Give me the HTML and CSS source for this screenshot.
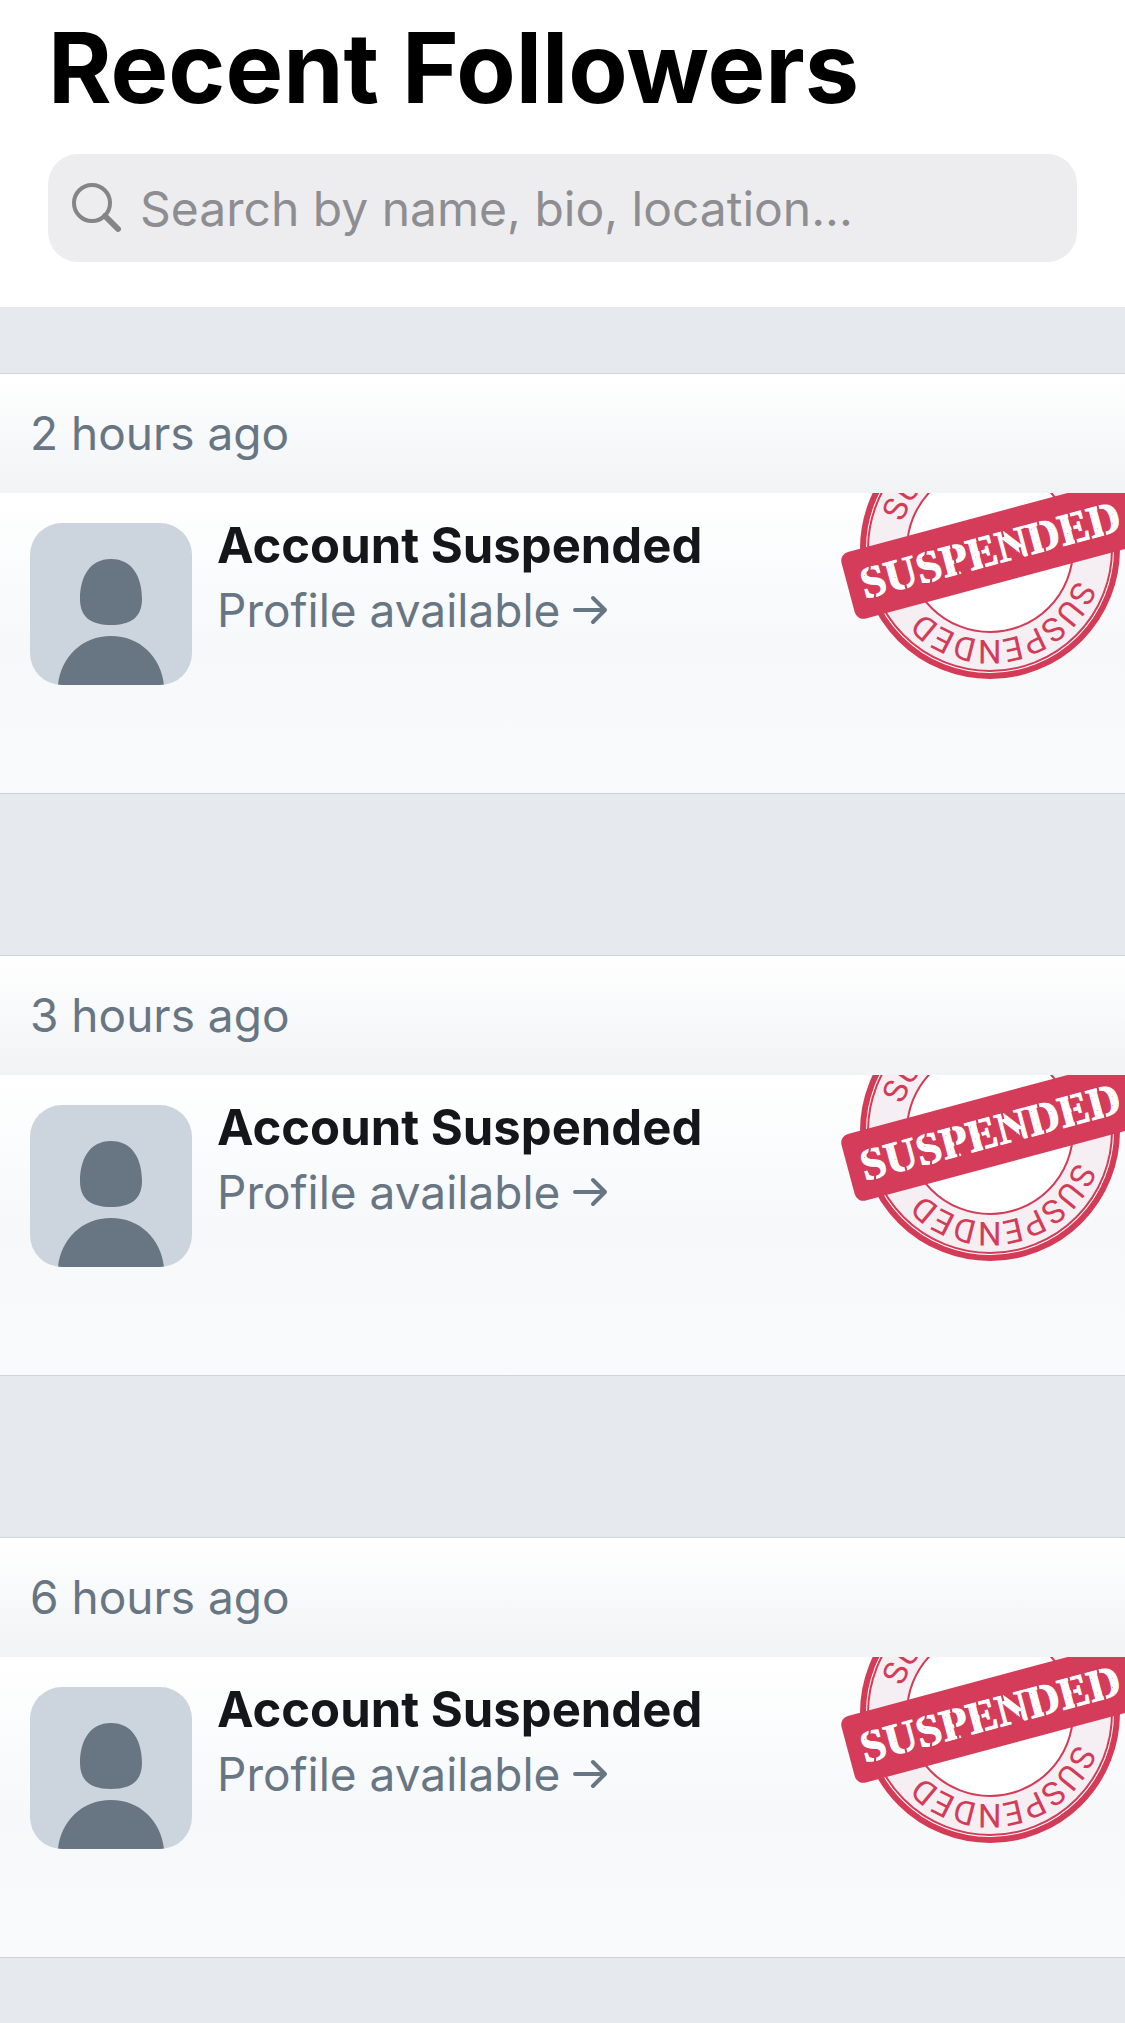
FILE: index.html
```html
<!DOCTYPE html>
<html lang="en">
<head>
<meta charset="utf-8">
<meta name="viewport" content="width=device-width, initial-scale=1">
<title>Recent Followers</title>
<link rel="stylesheet" href="styles.css">
</head>
<body>
<header class="page-header">
  <h1 class="title">Recent Followers</h1>
  <label class="search">
    <svg class="search-icon" viewBox="0 0 50 50" aria-hidden="true"><circle cx="20" cy="20" r="18"/><path d="M33 33 46 46"/></svg>
    <input class="search-input" type="search" placeholder="Search by name, bio, location..." aria-label="Search followers">
  </label>
</header>
<main class="feed">
  <section class="card">
    <h2 class="time">2 hours ago</h2>
    <div class="follower">
      <svg class="avatar" viewBox="0 0 162 162" aria-hidden="true"><path d="M81 36C103 36 112 55 112 76C112 95 100 102 81 102S50 95 50 76C50 55 59 36 81 36ZM28 162C31 134 52 113 81 113S131 134 134 162Z"/></svg>
      <div class="info">
        <h3 class="name">Account Suspended</h3>
        <a class="profile" href="#profile-1">Profile available <svg class="arrow" viewBox="0 0 36 30" aria-hidden="true"><path d="M3 15H33M21 3 33 15 21 27"/></svg></a>
      </div>
      <svg class="stamp" viewBox="0 0 290 190">
        <defs>
          <path id="ring" d="M91 0A91 91 0 0 1-91 0A91 91 0 0 1 91 0"/>
          <g id="wear">
            <path class="cuts" d="M-120-16-123-8M-121 9-124 18M-91 9V18M-62-16-65-8M-63 9-66 18M-37-16V18M-10-16V18M16-16V-8M29 6V18M53-16V18M85-16V18M115-16V18"/>
            <path class="specks" d="M-128-7h0M-116 10h0M-103-9h0M-99 3h0M-80 6h0M-67-2h0M-58 4h0M-70-9h0M-44-7h0M-43 7h0M-29-8h0M-18-9h0M-16 4h0M-2-10h0M15-4h0M21 3h0M25 9h0M45-8h0M47 6h0M64-3h0M78-9h0M79 5h0M92-11h0M107-6h0M109 8h0M127-2h0M125 7h0"/>
          </g>
        </defs>
        <g transform="translate(155 56)">
          <circle class="ring-gap" r="128"/><circle class="ring-outer" r="127"/><circle class="ring-band" r="122"/><circle class="ring-inner" r="83"/>
          <text class="ring-text"><textPath href="#ring" startOffset="124">SUSPENDED</textPath></text>
          <text class="ring-text"><textPath href="#ring" startOffset="405">SUSPENDED</textPath></text>
          <g transform="rotate(-15)">
            <rect class="banner" x="-147" y="-34" width="300" height="69" rx="9"/>
            <text class="banner-text" y="16">SUSPENDED</text>
            <use href="#wear"/>
          </g>
        </g>
      </svg>
    </div>
  </section>
  <section class="card">
    <h2 class="time">3 hours ago</h2>
    <div class="follower">
      <svg class="avatar" viewBox="0 0 162 162" aria-hidden="true"><path d="M81 36C103 36 112 55 112 76C112 95 100 102 81 102S50 95 50 76C50 55 59 36 81 36ZM28 162C31 134 52 113 81 113S131 134 134 162Z"/></svg>
      <div class="info">
        <h3 class="name">Account Suspended</h3>
        <a class="profile" href="#profile-2">Profile available <svg class="arrow" viewBox="0 0 36 30" aria-hidden="true"><path d="M3 15H33M21 3 33 15 21 27"/></svg></a>
      </div>
      <svg class="stamp" viewBox="0 0 290 190">
        <g transform="translate(155 56)">
          <circle class="ring-gap" r="128"/><circle class="ring-outer" r="127"/><circle class="ring-band" r="122"/><circle class="ring-inner" r="83"/>
          <text class="ring-text"><textPath href="#ring" startOffset="124">SUSPENDED</textPath></text>
          <text class="ring-text"><textPath href="#ring" startOffset="405">SUSPENDED</textPath></text>
          <g transform="rotate(-15)">
            <rect class="banner" x="-147" y="-34" width="300" height="69" rx="9"/>
            <text class="banner-text" y="16">SUSPENDED</text>
            <use href="#wear"/>
          </g>
        </g>
      </svg>
    </div>
  </section>
  <section class="card">
    <h2 class="time">6 hours ago</h2>
    <div class="follower">
      <svg class="avatar" viewBox="0 0 162 162" aria-hidden="true"><path d="M81 36C103 36 112 55 112 76C112 95 100 102 81 102S50 95 50 76C50 55 59 36 81 36ZM28 162C31 134 52 113 81 113S131 134 134 162Z"/></svg>
      <div class="info">
        <h3 class="name">Account Suspended</h3>
        <a class="profile" href="#profile-3">Profile available <svg class="arrow" viewBox="0 0 36 30" aria-hidden="true"><path d="M3 15H33M21 3 33 15 21 27"/></svg></a>
      </div>
      <svg class="stamp" viewBox="0 0 290 190">
        <g transform="translate(155 56)">
          <circle class="ring-gap" r="128"/><circle class="ring-outer" r="127"/><circle class="ring-band" r="122"/><circle class="ring-inner" r="83"/>
          <text class="ring-text"><textPath href="#ring" startOffset="124">SUSPENDED</textPath></text>
          <text class="ring-text"><textPath href="#ring" startOffset="405">SUSPENDED</textPath></text>
          <g transform="rotate(-15)">
            <rect class="banner" x="-147" y="-34" width="300" height="69" rx="9"/>
            <text class="banner-text" y="16">SUSPENDED</text>
            <use href="#wear"/>
          </g>
        </g>
      </svg>
    </div>
  </section>
</main>
</body>
</html>
```
FILE: styles.css
```css
* { box-sizing: border-box; }
body {
  margin: 0;
  background: #e6eaef;
  color: #15161a;
  font-family: Inter, "Liberation Sans", sans-serif;
}
h1, h2, h3 { margin: 0; }

.page-header { padding: 8px 48px 45px; background: #fff; }
.title { font-size: 97px; line-height: 120px; font-weight: 700; color: #000; }
.search {
  display: flex;
  align-items: center;
  gap: 18px;
  height: 108px;
  margin-top: 26px;
  padding: 0 24px;
  border-radius: 30px;
  background: #ededef;
}
.search-icon { flex: none; width: 50px; height: 50px; fill: none; stroke: #858588; stroke-width: 4; stroke-linecap: round; }
.search-icon path { stroke-width: 6; }
.search-input {
  flex: 1;
  min-width: 0;
  height: 100%;
  padding: 0;
  border: 0;
  outline: 0;
  background: none;
  font: 400 48px Inter, "Liberation Sans", sans-serif;
  color: #000;
}
.search-input::placeholder { color: #8e8e92; opacity: 1; }

.feed { display: flex; flex-direction: column; gap: 161px; padding: 66px 0; }
.card { border: solid #ccd3da; border-width: 1px 0; }
.time {
  padding: 29px 30px 30px;
  font-size: 46px;
  line-height: 60px;
  font-weight: 400;
  color: #687684;
  background: linear-gradient(#fff, #f1f3f5);
}
.follower {
  display: flex;
  align-items: flex-start;
  min-height: 300px;
  padding-left: 30px;
  background: linear-gradient(#fff, #f6f8fa 50%, #f9fafb);
}
.avatar { flex: none; width: 162px; height: 162px; margin-top: 30px; border-radius: 32px; background: #ccd5dd; fill: #687683; }
.info { flex: 1; min-width: 0; padding: 22px 0 0 25px; }
.name { font-size: 49px; line-height: 62px; font-weight: 700; }
.profile {
  display: flex;
  align-items: center;
  gap: 12px;
  font-size: 46px;
  line-height: 66px;
  color: #687684;
  text-decoration: none;
}
.arrow { width: 36px; height: 30px; fill: none; stroke: #687684; stroke-width: 4; stroke-linecap: round; stroke-linejoin: round; }

.stamp { flex: none; width: 290px; height: 190px; }
.stamp circle { fill: none; stroke: #d43b57; }
.stamp .ring-gap { fill: #fff; stroke: none; }
.stamp .ring-outer { stroke-width: 6; }
.stamp .ring-band { fill: #f5eef2; stroke-width: 2; }
.stamp .ring-inner { fill: #fff; stroke-width: 2; }
.ring-text { font: 400 33px Roboto, sans-serif; text-anchor: middle; fill: #d43b57; }
.banner { fill: #d53c59; }
.banner-text { font: 700 45px "Liberation Serif", serif; text-anchor: middle; fill: #fff; stroke: #fff; stroke-width: 1; }
.cuts { fill: none; stroke: #d53c59; stroke-width: 2; }
.specks { fill: none; stroke: #e58a9b; stroke-width: 1; stroke-linecap: round; }
```
